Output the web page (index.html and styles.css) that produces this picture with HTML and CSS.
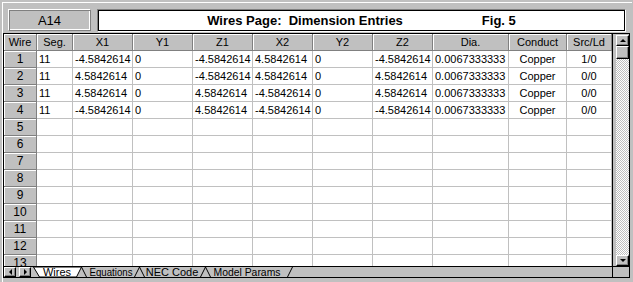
FILE: index.html
```html
<!DOCTYPE html>
<html lang="en">
<head>
  <meta charset="utf-8">
  <title>Wires Page</title>
  <link rel="stylesheet" href="styles.css">
</head>
<body>
  <div id="window">
    <div id="frame">
      <div id="topbar">
        <div id="cellRef">A14</div>
        <div id="pageTitle">
          <span>Wires Page:  Dimension Entries</span>
          <span>Fig. 5</span>
        </div>
      </div>

      <div id="sheet">
        <div id="sheetBody">
          <div id="grid">
            <div class="row head">
              <div>Wire</div><div>Seg.</div><div>X1</div><div>Y1</div><div>Z1</div><div>X2</div><div>Y2</div><div>Z2</div><div>Dia.</div><div>Conduct</div><div>Src/Ld</div>
            </div>
            <div class="row">
              <div class="num">1</div><div>11</div><div>-4.5842614</div><div>0</div><div>-4.5842614</div><div>4.5842614</div><div>0</div><div>-4.5842614</div><div>0.0067333333</div><div class="mid">Copper</div><div class="mid">1/0</div>
            </div>
            <div class="row">
              <div class="num">2</div><div>11</div><div>4.5842614</div><div>0</div><div>-4.5842614</div><div>4.5842614</div><div>0</div><div>4.5842614</div><div>0.0067333333</div><div class="mid">Copper</div><div class="mid">0/0</div>
            </div>
            <div class="row">
              <div class="num">3</div><div>11</div><div>4.5842614</div><div>0</div><div>4.5842614</div><div>-4.5842614</div><div>0</div><div>4.5842614</div><div>0.0067333333</div><div class="mid">Copper</div><div class="mid">0/0</div>
            </div>
            <div class="row">
              <div class="num">4</div><div>11</div><div>-4.5842614</div><div>0</div><div>4.5842614</div><div>-4.5842614</div><div>0</div><div>-4.5842614</div><div>0.0067333333</div><div class="mid">Copper</div><div class="mid">0/0</div>
            </div>
            <div class="row"><div class="num">5</div><div></div><div></div><div></div><div></div><div></div><div></div><div></div><div></div><div></div><div></div></div>
            <div class="row"><div class="num">6</div><div></div><div></div><div></div><div></div><div></div><div></div><div></div><div></div><div></div><div></div></div>
            <div class="row"><div class="num">7</div><div></div><div></div><div></div><div></div><div></div><div></div><div></div><div></div><div></div><div></div></div>
            <div class="row"><div class="num">8</div><div></div><div></div><div></div><div></div><div></div><div></div><div></div><div></div><div></div><div></div></div>
            <div class="row"><div class="num">9</div><div></div><div></div><div></div><div></div><div></div><div></div><div></div><div></div><div></div><div></div></div>
            <div class="row"><div class="num">10</div><div></div><div></div><div></div><div></div><div></div><div></div><div></div><div></div><div></div><div></div></div>
            <div class="row"><div class="num">11</div><div></div><div></div><div></div><div></div><div></div><div></div><div></div><div></div><div></div><div></div></div>
            <div class="row"><div class="num">12</div><div></div><div></div><div></div><div></div><div></div><div></div><div></div><div></div><div></div><div></div></div>
            <div class="row"><div class="num">13</div><div></div><div></div><div></div><div></div><div></div><div></div><div></div><div></div><div></div><div></div></div>
          </div>

          <div id="vScroll">
            <div class="scrollButton"><span class="arrowUp"></span></div>
            <div class="scrollTrack">
              <div class="scrollThumb"></div>
            </div>
            <div class="scrollButton"><span class="arrowDown"></span></div>
          </div>
        </div>

        <div id="sheetFoot">
          <div id="tabStrip">
            <div class="tabButton"><span class="arrowLeft"></span></div>
            <div class="tabButton"><span class="arrowRight"></span></div>
            <svg class="tabs" width="280" height="10" viewBox="0 0 280 10">
              <g class="tabEdges">
                <line x1="174.5" y1="0" x2="179.5" y2="10"/>
                <line x1="256.5" y1="10" x2="261.5" y2="0"/>
                <line x1="108.5" y1="0" x2="113.5" y2="10"/>
                <line x1="169.5" y1="10" x2="174.5" y2="0"/>
                <line x1="50.5" y1="0" x2="55.5" y2="10"/>
                <line x1="103.5" y1="10" x2="108.5" y2="0"/>
              </g>
              <polygon class="activeTab" points="2.5,0 8.5,10 45.5,10 50.5,0"/>
              <text x="26" y="8.5">Wires</text>
              <text x="80" y="8.5" textLength="43" lengthAdjust="spacingAndGlyphs">Equations</text>
              <text x="141" y="8.5">NEC Code</text>
              <text x="216" y="8.5" textLength="67" lengthAdjust="spacingAndGlyphs">Model Params</text>
            </svg>
          </div>
          <div id="corner"></div>
        </div>
      </div>
    </div>
  </div>
</body>
</html>
```

FILE: styles.css
```css
:root {
  --face: #c0c0c0;
  --shadow: #808080;
  --light: #ffffff;
  --grid-line: #c0c0c0;
}

* {
  box-sizing: border-box;
  padding: 0;
  margin: 0;
}

html,
body {
  width: 633px;
  height: 282px;
  overflow: hidden;
  background: var(--face);
  color: #000;
  font-family: "Liberation Sans", Arial, sans-serif;
  font-size: 11px;
}

#window {
  height: 282px;
  padding: 2px 1px 0 2px;
}

#frame {
  height: 100%;
  border-top: 1px solid var(--light);
  border-left: 1px solid var(--light);
}

/* top bar: cell reference + page title */
#topbar {
  display: flex;
  align-items: flex-start;
  gap: 6px;
  height: 30px;
  padding: 6px 0 1px 5px;
}

#cellRef {
  width: 83px;
  height: 22px;
  display: flex;
  align-items: center;
  justify-content: center;
  font-size: 13px;
  border: 1px solid;
  border-color: var(--light) var(--shadow) var(--shadow) var(--light);
  box-shadow: inset 1px 1px var(--shadow), inset -1px -1px var(--light);
}

#pageTitle {
  width: 529px;
  height: 23px;
  display: flex;
  align-items: center;
  justify-content: center;
  gap: 79px;
  background: #fff;
  font-size: 13px;
  font-weight: bold;
  white-space: pre;
  border: 1px solid;
  border-color: var(--shadow) var(--light) var(--light) var(--shadow);
  box-shadow: inset 1px 1px #000, inset -1px -1px #000;
}

/* spreadsheet */
#sheet {
  width: 627px;
  height: 245px;
  border: 1px solid #000;
  display: flex;
  flex-direction: column;
}

#sheetBody {
  display: flex;
  height: 232px;
}

#grid {
  width: 608px;
  height: 232px;
  overflow: hidden;
  background: #fff;
}

.row {
  display: grid;
  grid-template-columns: 33px 36px repeat(6, 60px) 76px 58px 45px;
  height: 17px;
}

.row > div {
  border-right: 1px solid var(--grid-line);
  border-bottom: 1px solid var(--grid-line);
  padding-left: 2px;
  line-height: 16px;
  white-space: nowrap;
  overflow: hidden;
}

.row.head > div,
.row > .num {
  background: var(--face);
  border-color: var(--shadow);
  box-shadow: inset 1px 1px var(--light);
  text-align: center;
  padding-left: 0;
}

.row > .num {
  font-size: 12px;
}

.row > .mid {
  text-align: center;
  padding-left: 0;
}

/* vertical scrollbar */
#vScroll {
  width: 17px;
  border-left: 1px solid #000;
  padding: 1px 0 0 3px;
  display: flex;
  flex-direction: column;
}

.scrollButton,
.scrollThumb,
.tabButton {
  background: var(--face);
  border: 1px solid;
  border-color: var(--light) #000 #000 var(--light);
  box-shadow: inset -1px -1px var(--shadow);
  display: flex;
  align-items: center;
  justify-content: center;
}

.scrollButton {
  height: 11px;
}

.scrollTrack {
  flex: 1;
  background: repeating-conic-gradient(var(--light) 0 25%, var(--face) 0 50%) 0 0 / 2px 2px;
}

.scrollThumb {
  height: 13px;
}

.arrowUp,
.arrowDown {
  width: 0;
  height: 0;
  border-left: 3px solid transparent;
  border-right: 3px solid transparent;
}

.arrowUp {
  border-bottom: 3px solid #000;
}

.arrowDown {
  border-top: 3px solid #000;
}

.arrowLeft,
.arrowRight {
  width: 0;
  height: 0;
  border-top: 3px solid transparent;
  border-bottom: 3px solid transparent;
}

.arrowLeft {
  border-right: 3px solid #000;
}

.arrowRight {
  border-left: 3px solid #000;
}

/* sheet tabs */
#sheetFoot {
  display: flex;
  height: 11px;
  border-top: 1px solid #000;
}

#tabStrip {
  width: 608px;
  display: flex;
  gap: 3px;
}

.tabButton {
  width: 12px;
  height: 10px;
}

.tabButton + .tabButton {
  margin-right: -3px;
}

.tabs {
  display: block;
  overflow: visible;
}

.tabEdges line {
  stroke: #000;
  stroke-width: 1;
}

.activeTab {
  fill: #fff;
  stroke: #000;
  stroke-width: 1;
}

.tabs text {
  font-family: "Liberation Sans", Arial, sans-serif;
  font-size: 11px;
  text-anchor: middle;
  fill: #000;
}

#corner {
  width: 17px;
  border-left: 1px solid #000;
}
```
